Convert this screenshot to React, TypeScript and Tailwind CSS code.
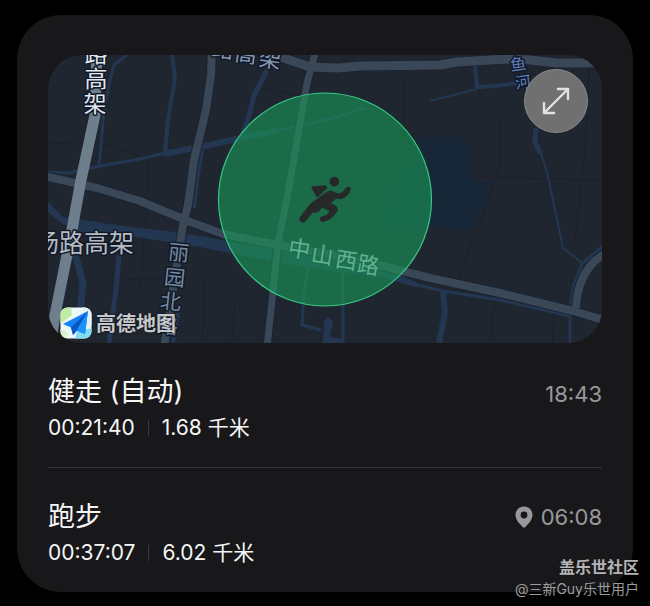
const sans = "font-['Inter','Noto_Sans_CJK_SC',sans-serif]";

type Activity = {
  name: string;
  duration: string;
  distance: string;
  time: string;
  located?: boolean;
};

const activities: Activity[] = [
  { name: "健走 (自动)", duration: "00:21:40", distance: "1.68 千米", time: "18:43" },
  { name: "跑步", duration: "00:37:07", distance: "6.02 千米", time: "06:08", located: true },
];

function MapDrawing() {
  return (
    <svg
      className="absolute inset-0 h-full w-full"
      viewBox="48 55 554 288"
      preserveAspectRatio="xMidYMid slice"
      role="img"
      aria-label="地图"
    >
      <rect x="0" y="0" width="700" height="400" fill="#202630" />

      {/* Minor streets */}
      <g fill="none" stroke="#1b212b" strokeWidth="1">
        <path d="M48 143 L110 145 L145 158 M147 155 V205 L140 290 M260 87 L300 96 M403 75 L405 160" />
        <path d="M462 67 L500 122 V165 L487 205 L455 285 M590 60 L585 150 L575 240 M440 176 L602 180" />
        <path d="M125 280 L165 278 M205 280 L202 343 M235 300 L232 343 M495 300 L490 343 M555 310 L552 343" />
      </g>

      {/* Park lake */}
      <path
        d="M417 137 H465 L469 154 L474 156 L472 180 L490 182 L484 203 L475 222 L472 230 L430 227 L380 230 L384 205 L395 170 L412 165 Z"
        fill="#172737"
      />

      {/* Waterways */}
      <g fill="none" stroke="#233752" strokeLinejoin="round">
        <path d="M48 172 L70 173 L100 166 L140 159 L165 153" strokeWidth="3" />
        <path d="M163 154 L210 145 L245 137 L275 131" strokeWidth="6" />
        <path d="M270 132 L330 119 L350 113 L358 109 L365 109" strokeWidth="3" />
        <path d="M127 55 L114 65 L110 80 L104 110 L99 166" strokeWidth="3" />
        <path d="M172 55 L175 78 L168 120 L165 153" strokeWidth="4" />
        <path d="M268 68 L261 82 L254 95 L250 112 L243 134" strokeWidth="5" />
        <path d="M202 150 L197 180 L194 208" strokeWidth="4" />
        <path d="M475 66 L477 87 L495 86 L525 82" strokeWidth="4" />
        <path d="M477 89 L430 101" strokeWidth="2" />
        <path d="M536 128 L535 142 L540 153" strokeWidth="5" />
        <path d="M540 151 L547 172 L563 248 L582 263" strokeWidth="2" />
        <path d="M604 245 L582 264 L574 285 L570 307 V343" strokeWidth="3" />
        <path d="M74 250 L83 283 L80 315" strokeWidth="7" />
        <path d="M119 255 L116 290 L109 343" strokeWidth="5" />
        <path d="M178 313 L173 343" strokeWidth="4" />
        <path d="M309 268 L304 290 L302 325 L321 330" strokeWidth="3" />
        <path d="M343 270 V343" strokeWidth="3" />
        <path d="M443 291 L445 313 L439 343" strokeWidth="6" />
        <path d="M413 284 L443 291 L500 300 L570 316" strokeWidth="3" />
      </g>
      <g fill="#233752">
        <path d="M48 202 L63 217 L123 226 L175 232 L240 243 L280 249 L340 258 L390 271 L425 286 L415 287 L378 276 L330 271 L275 262 L200 247 L123 235 L90 236 L63 224 L48 212 Z" />
        <path d="M324 322 L328 316 L333 322 L330 337 L344 339 V343 H322 L324 331 Z" />
      </g>

      {/* Roads, each drawn as a dark casing with a lighter core */}
      <g fill="none" strokeLinejoin="round">
        <g stroke="#192331" strokeWidth="10">
          <path d="M212 50 L211 75 L206 110 L194 160 L188 205 L183 225 L176 270 L164 348" />
          <path d="M316 50 L307 83 L288 193 L278 243 L267 348" />
          <path d="M272 54 L310 67 L338 68 L360 66 L440 65 L457 62 L507 59 L530 60 L557 63 L605 63" />
          <path d="M40 175 L97 188 L140 201 L188 221 L223 234 L278 245 L333 255 L387 267 L430 278 L500 293 L573 311 L607 321" />
          <path d="M610 251 Q578 266 576 308" />
        </g>
        <g stroke="#3a4757" strokeWidth="8">
          <path d="M212 50 L211 75 L206 110 L194 160 L188 205 L183 225 L176 270 L164 348" />
          <path d="M316 50 L307 83 L288 193 L278 243 L267 348" strokeWidth="7" />
          <path d="M272 54 L310 67 L338 68 L360 66 L440 65 L457 62 L507 59 L530 60 L557 63 L605 63" strokeWidth="9" />
          <path d="M40 175 L97 188 L140 201 L188 221 L223 234 L278 245 L333 255 L387 267 L430 278 L500 293 L573 311 L607 321" />
          <path d="M610 251 Q578 266 576 308" />
        </g>
        <path d="M80 50 H112 L98 68 Z" fill="#3a4757" />
        <path d="M97 50 L95 115 L81 180 L71 235 L55 315 L50 348" stroke="#6e7e8d" strokeWidth="11" />
      </g>

      {/* Street names */}
      <g
        className="font-['Noto_Sans_CJK_SC',sans-serif]"
        textAnchor="middle"
        stroke="#111927"
        strokeWidth="3"
        strokeLinejoin="round"
        paintOrder="stroke"
      >
        <g fill="#e2e7ef" fontSize="23">
          <text x="96" y="62">路</text>
          <text x="96" y="87">高</text>
          <text x="95" y="112">架</text>
        </g>
        <text x="84" y="252" fill="#b4bac2" fontSize="25">汤路高架</text>
        <g fill="#8797b2" fontSize="22">
          <text transform="translate(222 57) rotate(8)">路</text>
          <text transform="translate(245 62) rotate(8)">高</text>
          <text transform="translate(269 67) rotate(8)">架</text>
        </g>
        <g fill="#7688a2" fontSize="21">
          <text transform="translate(178 260) rotate(6)">丽</text>
          <text transform="translate(174 285) rotate(6)">园</text>
          <text transform="translate(170 309) rotate(6)">北</text>
          <text transform="translate(167 333) rotate(6)">路</text>
        </g>
        <g fill="#5f7db8" fontSize="16">
          <text transform="translate(519 70) rotate(-8)">鱼</text>
          <text transform="translate(524 88) rotate(-8)">河</text>
        </g>
        <g fill="#c6d6e6" stroke="#26323f" fontSize="22">
          <text transform="translate(298 257) rotate(9)">中</text>
          <text transform="translate(321 263) rotate(9)">山</text>
          <text transform="translate(345 268) rotate(9)">西</text>
          <text transform="translate(367 273) rotate(9)">路</text>
        </g>
      </g>

      {/* Activity area */}
      <circle cx="325" cy="199.5" r="106.5" fill="#199958" fillOpacity="0.6" stroke="#35c985" strokeWidth="1.2" />
      <g transform="translate(290 165) scale(0.3333)" fill="#26282a" stroke="#26282a" strokeLinejoin="round">
        <circle cx="133" cy="50" r="14.5" stroke="none" />
        <path d="M67 67 L106 64 L109 68 L82 94 Z" strokeWidth="6" />
        <path
          d="M112 80 Q122 75 133 82 L148 87 Q158 84 168 70 Q176 62 182 70 Q180 86 164 97 Q152 105 138 100 L122 115 L138 124 Q145 130 141 140 L128 155 Q122 163 100 170 Q90 170 90 162 Q90 156 100 154 L112 150 L119 138 L96 126 L88 138 Q84 142 68 142 L46 168 Q38 176 30 167 Q26 160 34 152 L62 116 Z"
          strokeWidth="2"
        />
      </g>
    </svg>
  );
}

function MapBrand() {
  return (
    <div className="absolute bottom-1 left-3 flex items-center gap-1">
      <svg className="size-8" viewBox="0 0 32 32" aria-hidden="true">
        <defs>
          <clipPath id="brand-tile">
            <rect x="0.5" y="0.5" width="31" height="31" rx="7" />
          </clipPath>
        </defs>
        <g clipPath="url(#brand-tile)">
          <rect width="32" height="32" fill="#f0f7f8" />
          <path d="M0 0 H11 L12 8 L0 17 Z" fill="#c0eda6" />
          <path d="M22 0 H32 V19 L26 21 Z" fill="#e3f1f5" />
          <path d="M17 25 L32 21 V32 H15 Z" fill="#7edcf7" />
          <path d="M0 22 L9 26 L5 32 H0 Z" fill="#d9f3c8" />
          <path d="M28 4 L3 17 L11 20.5 L13 28 L17 24 L25 27 Z" fill="#1683f5" />
          <path d="M28 4 L11 20.5 L13 28 L17 23 Z" fill="#0756c5" />
          <path d="M28 4 L17 23 L25 27 Z" fill="#1e91fa" />
        </g>
      </svg>
      <span className="font-['Noto_Sans_CJK_SC',sans-serif] text-xl leading-8 font-bold text-[#c5c8cb] [text-shadow:0_0_2px_#000]">
        高德地图
      </span>
    </div>
  );
}

function ActivityRow({ activity }: { activity: Activity }) {
  return (
    <li className="border-b border-[#343436] pt-[29px] pb-[23px] last:border-b-0">
      <div className="flex items-center justify-between">
        <h2 className="text-[27px] leading-10">{activity.name}</h2>
        <div className={`flex items-center gap-2 text-[#98989c] ${activity.located ? "" : "pt-1"}`}>
          {activity.located && (
            <svg className="h-[22px] w-[18px]" viewBox="0 0 18 22" aria-hidden="true">
              <path
                fill="currentColor"
                fillRule="evenodd"
                d="M9 0.5 C4 0.5 0.5 4.2 0.5 9 C0.5 14.5 5.5 18.5 7.7 21 Q9 22.3 10.3 21 C12.5 18.5 17.5 14.5 17.5 9 C17.5 4.2 14 0.5 9 0.5 Z M9 5.6 A3.4 3.4 0 1 1 9 12.4 A3.4 3.4 0 1 1 9 5.6 Z"
              />
            </svg>
          )}
          <time className="text-[22px] leading-8">{activity.time}</time>
        </div>
      </div>
      <div className="flex items-center gap-[13px] text-[21px] leading-8">
        <span>{activity.duration}</span>
        <span className="h-4 w-px bg-[#3a3a3d]" />
        <span>{activity.distance}</span>
      </div>
    </li>
  );
}

export default function App() {
  return (
    <div className={`relative min-h-screen bg-black px-[17px] py-[15px] text-[#f6f6f7] ${sans}`}>
      <main className="rounded-[44px] bg-[#18181a] px-[31px] pt-10">
        <section className="relative h-72 overflow-hidden rounded-[34px]">
          <MapDrawing />
          <MapBrand />
          <button
            type="button"
            aria-label="展开地图"
            className="absolute top-3.5 right-3.5 flex size-16 items-center justify-center rounded-full border border-[#8b8b8b] bg-[#707070] text-[#e2e2e2]"
          >
            <svg
              className="size-8"
              viewBox="0 0 32 32"
              fill="none"
              stroke="currentColor"
              strokeWidth="2.4"
              strokeLinecap="round"
              strokeLinejoin="round"
              aria-hidden="true"
            >
              <path d="M4 28 L28 4 M18 4 H28 V14 M4 18 V28 H14" />
            </svg>
          </button>
        </section>
        <ul>
          {activities.map((activity) => (
            <ActivityRow key={activity.time} activity={activity} />
          ))}
        </ul>
      </main>
      <footer className="absolute right-[11px] bottom-2 text-right text-[#9c9c9e]">
        <p className="text-base leading-6 font-bold text-[#b4b4b6]">盖乐世社区</p>
        <p className="text-sm leading-5">@三新Guy乐世用户</p>
      </footer>
    </div>
  );
}
